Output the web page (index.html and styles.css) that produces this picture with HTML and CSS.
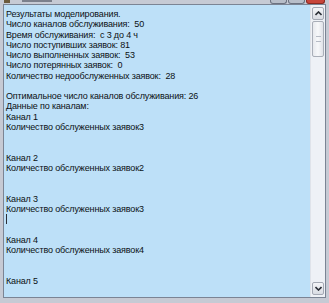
FILE: index.html
```html
<!DOCTYPE html>
<html lang="ru">
<head>
  <meta charset="UTF-8">
  <title>Отчет</title>
  <link rel="stylesheet" href="styles.css">
</head>
<body>
  <div class="window">
    <div class="titlebar">
      <span class="app-icon"></span>
      <span class="title-strip"></span>
      <div class="buttons">
        <span class="btn"></span>
        <span class="btn"></span>
        <span class="btn close"></span>
      </div>
    </div>
    <div class="client">
      <div class="report">
        <div class="line">Результаты моделирования.</div>
        <div class="line">Число каналов обслуживания:  50</div>
        <div class="line">Время обслуживания:  с 3 до 4 ч</div>
        <div class="line">Число поступивших заявок: 81</div>
        <div class="line">Число выполненных заявок:  53</div>
        <div class="line">Число потерянных заявок:  0</div>
        <div class="line">Количество недообслуженных заявок:  28</div>
        <div class="line"></div>
        <div class="line">Оптимальное число каналов обслуживания: 26</div>
        <div class="line">Данные по каналам:</div>
        <div class="line">Канал 1</div>
        <div class="line">Количество обслуженных заявок3</div>
        <div class="line"></div>
        <div class="line"></div>
        <div class="line">Канал 2</div>
        <div class="line">Количество обслуженных заявок2</div>
        <div class="line"></div>
        <div class="line"></div>
        <div class="line">Канал 3</div>
        <div class="line">Количество обслуженных заявок3</div>
        <div class="line"><span class="caret"></span></div>
        <div class="line"></div>
        <div class="line">Канал 4</div>
        <div class="line">Количество обслуженных заявок4</div>
        <div class="line"></div>
        <div class="line"></div>
        <div class="line">Канал 5</div>
      </div>
      <div class="scrollbar">
        <div class="arrow">
          <svg width="7" height="5" viewBox="0 0 7 5"><path d="M0.5 4 L3.5 1 L6.5 4" fill="none" stroke="#2a2e36" stroke-width="1.6"/></svg>
        </div>
        <div class="thumb"><span class="grip"></span></div>
        <div class="track"></div>
        <div class="arrow">
          <svg width="7" height="5" viewBox="0 0 7 5"><path d="M0.5 1 L3.5 4 L6.5 1" fill="none" stroke="#2a2e36" stroke-width="1.6"/></svg>
        </div>
      </div>
    </div>
  </div>
</body>
</html>
```

FILE: styles.css
```css
* {
  margin: 0;
  padding: 0;
  box-sizing: border-box;
}

body {
  width: 329px;
  height: 303px;
  overflow: hidden;
  background: #c8ccd5;
}

.window {
  width: 329px;
  height: 303px;
  display: flex;
  flex-direction: column;
  padding: 0 3px 5px 3px;
  background: #c6cad4;
}

.titlebar {
  height: 4px;
  display: flex;
  align-items: flex-start;
  overflow: hidden;
}

.app-icon {
  width: 6px;
  height: 3px;
  margin-left: 1px;
  background: #6b5a3c;
}

.title-strip {
  width: 30px;
  height: 2px;
  margin-left: 12px;
  background: #7b808c;
}

.buttons {
  margin-left: auto;
  margin-right: 1px;
  display: flex;
  gap: 1px;
}

.btn {
  width: 17px;
  height: 4px;
  background: #b8bec9;
  border: 1px solid #6c7280;
  border-top: none;
  border-radius: 0 0 3px 3px;
}

.btn.close {
  width: 19px;
  background: #c8453a;
  border-color: #8a2a22;
}

.client {
  flex: 1;
  display: flex;
  border: 1px solid #7b8494;
  min-height: 0;
}

.report {
  flex: 1;
  background: #bde0f8;
  padding: 4px 2px 0 2px;
  font-family: "Liberation Sans", Arial, sans-serif;
  font-size: 9px;
  letter-spacing: -0.15px;
  line-height: 10.25px;
  color: #0c1014;
  overflow: hidden;
}

.line {
  height: 10.25px;
  white-space: pre;
}

.caret {
  display: inline-block;
  width: 1px;
  height: 10px;
  background: #2a2e36;
  vertical-align: top;
}

.scrollbar {
  width: 15px;
  display: flex;
  flex-direction: column;
  background: #eef1f6;
  border-left: 1px solid #dfe3ea;
  padding: 2px 1px;
}

.arrow {
  height: 13px;
  display: flex;
  align-items: center;
  justify-content: center;
  background: linear-gradient(#f4f5f8, #d9dce3);
  border: 1px solid #a4a9b4;
  border-radius: 2px;
}

.thumb {
  height: 36px;
  margin-top: 1px;
  display: flex;
  align-items: center;
  justify-content: center;
  background: linear-gradient(90deg, #e7e9ee, #f7f8fa 50%, #dfe2e8);
  border: 1px solid #a9aeb8;
  border-radius: 2px;
}

.grip {
  width: 5px;
  height: 6px;
  border-top: 1px solid #b6bbc5;
  border-bottom: 1px solid #b6bbc5;
}

.track {
  flex: 1;
}
```
